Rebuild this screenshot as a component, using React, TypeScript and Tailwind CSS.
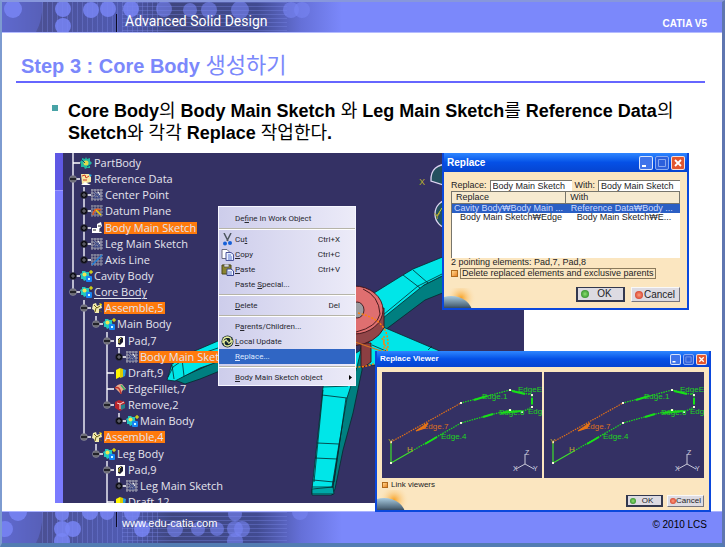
import type { ReactNode } from "react";
import clsx from "clsx";

type NodeIcon = "part" | "reference" | "sketch" | "plane" | "activeSketch" | "axis" | "body" | "assemble" | "pad" | "draft" | "fillet" | "remove";

interface TreeNode {
  label: string;
  level: number;
  icon: NodeIcon;
  knob?: "plus" | "minus";
  selected?: boolean;
  underline?: boolean;
}

const TREE: TreeNode[] = [
  { label: "PartBody", level: 0, icon: "part" },
  { label: "Reference Data", level: 0, icon: "reference", knob: "minus" },
  { label: "Center Point", level: 1, icon: "sketch", knob: "plus" },
  { label: "Datum Plane", level: 1, icon: "plane", knob: "plus" },
  { label: "Body Main Sketch", level: 1, icon: "activeSketch", knob: "plus", selected: true },
  { label: "Leg Main Sketch", level: 1, icon: "sketch", knob: "plus" },
  { label: "Axis Line", level: 1, icon: "axis", knob: "plus" },
  { label: "Cavity Body", level: 0, icon: "body", knob: "plus" },
  { label: "Core Body", level: 0, icon: "body", knob: "minus", underline: true },
  { label: "Assemble,5", level: 1, icon: "assemble", knob: "minus", selected: true },
  { label: "Main Body", level: 2, icon: "body", knob: "minus" },
  { label: "Pad,7", level: 3, icon: "pad", knob: "minus" },
  { label: "Body Main Sketch", level: 4, icon: "sketch", knob: "plus", selected: true },
  { label: "Draft,9", level: 3, icon: "draft" },
  { label: "EdgeFillet,7", level: 3, icon: "fillet" },
  { label: "Remove,2", level: 3, icon: "remove", knob: "minus" },
  { label: "Main Body", level: 4, icon: "body", knob: "plus" },
  { label: "Assemble,4", level: 1, icon: "assemble", knob: "minus", selected: true },
  { label: "Leg Body", level: 2, icon: "body", knob: "minus" },
  { label: "Pad,9", level: 3, icon: "pad", knob: "minus" },
  { label: "Leg Main Sketch", level: 4, icon: "sketch", knob: "plus" },
  { label: "Draft,12", level: 3, icon: "draft" },
];

const INDENT = ["pl-[5px]", "pl-[16px]", "pl-[28px]", "pl-[39px]", "pl-[51px]"];

const HEADER_DOTS = [
  [11, 7, 9], [61, 7, 8], [61, 24, 8], [89, 8, 8], [106, 7, 8], [129, 7, 8],
  [162, 7, 8], [188, 8, 7], [207, 8, 8], [238, 8, 9], [289, 8, 8], [300, 8, 8],
];
const FOOTER_DOTS = [
  [3, 17, 8], [16, 0, 9], [60, 2, 7], [60, 17, 8], [60, 29, 8], [71, 17, 8], [88, 0, 8], [105, 1, 7],
  [130, 1, 8], [140, 17, 8], [173, 17, 8], [196, 17, 7], [215, 17, 7], [233, 2, 7], [233, 17, 8], [233, 29, 8], [240, 17, 8], [298, 0, 8],
];

function BandArt({ id, dots, height }: { id: string; dots: number[][]; height: number }) {
  return (
    <svg className="absolute inset-y-0 left-0" width="340" height={height} viewBox={`0 0 340 ${height}`} aria-hidden="true">
      <defs>
        <linearGradient id={`${id}-base`}>
          <stop offset="0" stopColor="#6670dc" />
          <stop offset=".12" stopColor="#4b5094" />
          <stop offset=".35" stopColor="#505bb2" />
          <stop offset=".5" stopColor="#3f467f" />
          <stop offset=".75" stopColor="#414b91" />
          <stop offset=".88" stopColor="#6570d8" />
          <stop offset="1" stopColor="#7b88fb" />
        </linearGradient>
        <pattern id={`${id}-v`} width="5" height="8" patternUnits="userSpaceOnUse">
          <path d="M.5 0v8" stroke="#7b88e8" strokeWidth=".7" />
        </pattern>
        <pattern id={`${id}-h`} width="8" height="4" patternUnits="userSpaceOnUse">
          <path d="M0 .5h8" stroke="#7b88e8" strokeWidth=".7" />
        </pattern>
      </defs>
      <rect width="340" height={height} fill={`url(#${id}-base)`} />
      <path d={`M0 0H41Q40 20 34 ${height}H0Z`} fill="#5c66c8" opacity=".7" />
      <rect x="38" width="122" height={height} fill={`url(#${id}-v)`} opacity=".5" />
      <rect x="120" width="165" height={height} fill={`url(#${id}-h)`} opacity=".5" />
      {dots.map(([cx, cy, r], i) => (
        <circle key={i} cx={cx} cy={cy} r={r} fill="#7885f4" opacity={cx > 150 ? 0.6 : 0.85} />
      ))}
    </svg>
  );
}

function TreeIcon({ kind }: { kind: NodeIcon }) {
  const art: Record<NodeIcon, ReactNode> = {
    part: (
      <>
        <path d="M6 0l1 2 3-1 0 3 2 2-2 2 0 3-3 0-2 1-1-2-3 0 0-3-1-2 2-2 0-2 3 1z" fill="#22b7a0" />
        <circle cx="6" cy="6" r="2.5" fill="#e3d94c" />
        <path d="M2 3l3 3m2 4l3-2" stroke="#0a4c70" />
      </>
    ),
    body: (
      <>
        <path d="M5 1l1 1 3 0 0 3 1 2-1 3-3 0-2 1-1-2-2 0 0-3-1-2 2-1 0-2z" fill="#22c7c0" />
        <circle cx="4.500" cy="4.500" r="2" fill="#f0e454" />
        <rect x="6" y="6" width="6" height="6" rx="1" fill="#1685f4" />
        <path d="M8 8h2v2H8z" fill="#cff" />
        <path d="M11 0v4M9 2h4" stroke="#ff0" />
      </>
    ),
    reference: (
      <>
        <path d="M1 1h8l2 3v5l-9 2z" fill="#f7e9a6" />
        <path d="M2 3l3-1 1 3 3-2M3 7h4" stroke="#d33a20" fill="none" />
        <path d="M1 12l4-3 6 3z" fill="#fff" />
        <path d="M9 1l3 1-2 2z" fill="#2ad" />
      </>
    ),
    sketch: (
      <>
        <path d="M0 1h12M0 4h12M0 7h12M0 10h12M1 0v12M4 0v12M7 0v12M10 0v12" stroke="#a5a7b5" strokeWidth="1" />
        <path d="M3 3l6 6M4 7l4-3v5H3z" stroke="#3c4c8c" fill="none" />
        <path d="M7 3l2 3" stroke="#fff" />
      </>
    ),
    plane: (
      <>
        <path d="M0 1h12M0 4h12M0 7h12M0 10h12M1 0v12M4 0v12M7 0v12M10 0v12" stroke="#8d8fa0" strokeWidth="1" />
        <path d="M2 10Q3 2 10 5" stroke="#e45a20" strokeWidth="1.500" fill="none" />
        <path d="M5 5l5 5" stroke="#ec0" strokeWidth="1.500" />
      </>
    ),
    activeSketch: (
      <>
        <path d="M1 6h5v5H1zM6 2l4-2 1 4-3 3 3 4H6z" fill="#fff" />
        <path d="M2 8h3M7 4l3 0M8 9h2" stroke="#222" />
      </>
    ),
    axis: (
      <>
        <path d="M0 1h12M0 4h12M0 7h12M0 10h12M1 0v12M4 0v12M7 0v12M10 0v12" stroke="#9698a8" strokeWidth="1" />
        <path d="M1 11L11 1" stroke="#1f7fd8" strokeWidth="1.500" />
      </>
    ),
    assemble: (
      <>
        <path d="M2 2l3-1 1 3 4-2 1 4-3 1 0 4-4 0-1-3-2-1z" fill="#f3ecae" />
        <path d="M3 3l3 3 3-2M5 6l-1 4M8 8l3 2" stroke="#6a5b12" fill="none" />
        <path d="M8 1l3 1-1 2z" fill="#ffe600" />
      </>
    ),
    pad: (
      <>
        <path d="M2 1h9v11H2z" fill="#fff" />
        <path d="M4 9V4l3-2 2 1v4L6 10z" fill="#1c1c30" />
        <path d="M5 8V5l2-2" stroke="#e2d53f" fill="none" />
      </>
    ),
    draft: (
      <>
        <path d="M2 3l4-2v9l-4 2z" fill="#fff600" />
        <path d="M6 1l3 1v8l-3 1z" fill="#dccb00" />
        <path d="M9 2l3 1-1 6-2 1z" fill="#2b9ed8" />
      </>
    ),
    fillet: (
      <>
        <path d="M1 5q2-4 7-4l4 5q-4 0-5 5z" fill="#e9a98c" />
        <path d="M1 5q5-2 6 6" fill="none" stroke="#c0362c" strokeWidth="1.500" />
        <path d="M7 2l4 5" stroke="#35b26a" strokeWidth="1.500" />
      </>
    ),
    remove: (
      <>
        <path d="M1 3l4-2 6 2v6l-5 3-5-3z" fill="#b6242c" />
        <path d="M3 4l3 1 4-2M6 5v5" stroke="#ffd8d0" fill="none" />
        <path d="M7 6l4-1v4l-4 2z" fill="#23808c" />
      </>
    ),
  };
  return (
    <svg className="h-3 w-3 shrink-0 overflow-visible" viewBox="0 0 12 12" aria-hidden="true">
      {art[kind]}
    </svg>
  );
}

function Knob({ type }: { type?: "plus" | "minus" }) {
  return (
    <svg className="h-[10px] w-[12px] shrink-0" viewBox="0 0 12 10" aria-hidden="true">
      <path d="M5 5h7" stroke="#fff" strokeWidth="1.500" />
      {type && <circle cx="5" cy="5" r="3.500" fill={type === "plus" ? "#0b0b12" : "#6a6a72"} stroke={type === "plus" ? "#33334a" : "#8b8ba0"} strokeWidth=".6" />}
      {type === "plus" && <path d="M3 5h4M5 3v4" stroke="#8a8a96" strokeWidth=".8" />}
      {type === "minus" && <path d="M2 5h6" stroke="#0b0b12" strokeWidth="1.500" />}
    </svg>
  );
}

function SpecTree() {
  return (
    <div className="relative pt-[2px]">
      <svg className="absolute left-0 top-0" width="80" height="350" viewBox="0 0 80 350" aria-hidden="true">
        <path
          d="M10 0V139M21 34V107M21 147V284M33 163V172M44 179V253M56 195V204M56 260V268M33 291V301M44 308V350M56 325V333"
          stroke="#e8e8f2"
          strokeWidth="1.500"
        />
      </svg>
      <ul className="relative flex h-[355px] flex-col justify-between">
        {TREE.map((node, i) => (
          <li key={i} className={clsx("flex h-4 items-center whitespace-nowrap", INDENT[node.level])}>
            <Knob type={node.knob} />
            <TreeIcon kind={node.icon} />
            <span
              className={clsx(
                "ml-[1px] pl-[1px] font-['Open_Sans','Liberation_Sans',sans-serif] text-[11px] leading-[12px] text-[#e4e4ee]",
                node.selected && "bg-[#ff7a0c] pr-[1px]",
                node.underline && "underline underline-offset-2",
              )}
            >
              {node.label}
            </span>
          </li>
        ))}
      </ul>
    </div>
  );
}

function Model() {
  return (
    <svg className="absolute inset-0" width="469" height="350" viewBox="55 153 469 350" aria-hidden="true">
      <g stroke="#06282c" strokeWidth=".8" strokeLinejoin="round">
        <path d="M175 380L218 361L232 358V366L200 379L185 384Z" fill="#007f80" />
        <path d="M167 380L172 364L190 353L232 335V357L200 368L175 381Z" fill="#00e6e8" />
        <path d="M168 377l5-10 10-7 35-12M172 365l2 14M182 359l2 17" fill="none" />

        <path d="M383 331V317L420 287L450 272V290L425 300L385 330Z" fill="#007f80" />
        <path d="M374 293L403 275L413 269L450 254V272L424 285L383 318Z" fill="#00e6e8" />
        <path d="M403 275L420 288M413 270L428 283M383 315L418 286L450 270" fill="none" />

        <path d="M366 345L383 327L442 352V365H366Z" fill="#00e6e8" />
        <path d="M372 345l14 6M428 350l4-4" fill="none" />
        <path d="M352 380L362 343V370L353 413L343 450L335 489L332 495L334 480L346 398Z" fill="#007f80" />
        <path d="M328 370L361 350L357 367L347 398L338 450L332 487V495H312V489L317 443L323 387Z" fill="#00e6e8" />
        <path d="M312 494V489L333 487L334 494Z" fill="#00a7a8" />
        <path d="M323 387L348 386M322 395L347 398M317 443L339 444M315 458L337 459M313 480L334 482M312 487H333M323 390L314 482M346 398L334 482" fill="none" />
      </g>
      <g stroke="#3b1216" strokeWidth=".9">
        <path d="M361 343H371V362L364 367H361Z" fill="#8c3f42" />
        <path d="M325 311V325Q330 346 354 346Q376 343 384 328V308Z" fill="#924548" />
        <ellipse cx="354" cy="310" rx="29" ry="24" fill="#df6f70" />
        <path d="M363 289Q379 296 380 314Q377 327 356 332" fill="none" />
        <ellipse cx="357" cy="310" rx="7" ry="8" fill="#9b9ba0" />
      </g>
      <path d="M358 313Q380 318 386 332Q392 352 380 361Q370 367 355 367M384 336v15M382 338l5 12" stroke="#ff8108" strokeWidth="1.500" strokeDasharray="2 1.500" fill="none" />
      <path d="M355 342L387 353" stroke="#d97420" strokeWidth="1.200" />
      <g stroke="#ddd4f2" strokeWidth="1.300" fill="#24505f">
        <path d="M450 164Q430 164 431 181L450 187Z" />
        <ellipse cx="448" cy="214" rx="13" ry="14" />
      </g>
      <path d="M437 216l5-8" stroke="#d8d020" />
      <g fill="#b5ad2c" fontSize="9" fontFamily="Liberation Sans, sans-serif">
        <text x="419" y="185">X</text>
        <text x="434" y="219">Y</text>
      </g>
    </svg>
  );
}

interface MenuItemProps {
  before?: string;
  hot: string;
  after: string;
  shortcut?: string;
  icon?: ReactNode;
  active?: boolean;
  submenu?: boolean;
}

function MenuItem({ before, hot, after, shortcut, icon, active, submenu }: MenuItemProps) {
  return (
    <button
      type="button"
      role="menuitem"
      className={clsx("flex h-[15px] w-full items-center text-left leading-[15px]", active ? "bg-[#3066c4] text-[#dfe9ff]" : "text-[#26262e]")}
    >
      <span className="flex w-[16px] shrink-0 justify-center">{icon}</span>
      <span className="flex-1 whitespace-nowrap">
        {before}
        <u>{hot}</u>
        {after}
      </span>
      {shortcut && <span className="mr-[15px]">{shortcut}</span>}
      {submenu && (
        <svg className="mr-[3px] h-[5px] w-[3px]" viewBox="0 0 3 5" aria-hidden="true">
          <path d="M0 0l3 2.500L0 5z" />
        </svg>
      )}
    </button>
  );
}

function MenuRule() {
  return (
    <div role="separator" className="flex h-[6px] items-center">
      <div className="h-[2px] w-full border-t border-[#b6b4a8] bg-white" />
    </div>
  );
}

const CutIcon = (
  <svg className="h-[13px] w-[11px]" viewBox="0 0 11 13" fill="none" aria-hidden="true">
    <path d="M2 0l4 8M9 0L5 8" stroke="#4d5660" strokeWidth="1.500" />
    <circle cx="3" cy="10.500" r="2" fill="#1560d8" />
    <circle cx="8" cy="10" r="2" fill="#1560d8" />
  </svg>
);

const CopyIcon = (
  <svg className="h-[12px] w-[13px]" viewBox="0 0 13 12" aria-hidden="true">
    <path d="M1 .5h5l2 2v7H1z" fill="#fff" stroke="#6b6b80" />
    <path d="M5 3.500h5l2.500 2v6H5z" fill="#e9efff" stroke="#4b549c" />
    <path d="M7 6h3M7 8h4M7 10h4" stroke="#5f7ad0" />
  </svg>
);

const PasteIcon = (
  <svg className="h-[12px] w-[13px]" viewBox="0 0 13 12" aria-hidden="true">
    <path d="M1 1h9v9H1z" fill="#8a8430" stroke="#4c4818" />
    <path d="M3 0h5v3H3z" fill="#d8d8d8" stroke="#444" strokeWidth=".6" />
    <path d="M6 5h4l2.500 2v4.500H6z" fill="#f4f7ff" stroke="#3a4690" />
    <path d="M7 8h4M7 10h4" stroke="#5f7ad0" />
  </svg>
);

const UpdateIcon = (
  <svg className="h-[13px] w-[13px]" viewBox="0 0 13 13" fill="none" aria-hidden="true">
    <circle cx="6.500" cy="6.500" r="6" fill="#10242c" />
    <path d="M2 8Q1 3 6 2q4 0 4 3T7 8M11 5q1 5-4 6-4 0-4-3t3-3" stroke="#e6ec9c" strokeWidth="1.300" />
    <circle cx="6.500" cy="6.500" r="1" fill="#e6ec9c" />
  </svg>
);

function ContextMenu() {
  return (
    <div
      role="menu"
      className="absolute left-[163px] top-[53px] w-[138px] border border-[#f6f6ff] bg-linear-to-r from-[#cdcdeb] to-[#ecebf8] pt-1 font-['Roboto','Liberation_Sans',sans-serif] text-[8px]"
    >
      <MenuItem before="De" hot="f" after="ine In Work Object" />
      <MenuRule />
      <MenuItem before="Cu" hot="t" after="" shortcut="Ctrl+X" icon={CutIcon} />
      <MenuItem hot="C" after="opy" shortcut="Ctrl+C" icon={CopyIcon} />
      <MenuItem hot="P" after="aste" shortcut="Ctrl+V" icon={PasteIcon} />
      <MenuItem before="Paste " hot="S" after="pecial..." />
      <MenuRule />
      <MenuItem hot="D" after="elete" shortcut="Del" />
      <MenuRule />
      <MenuItem before="P" hot="a" after="rents/Children..." />
      <MenuItem hot="L" after="ocal Update" icon={UpdateIcon} />
      <MenuItem hot="R" after="eplace..." active />
      <MenuRule />
      <MenuItem hot="B" after="ody Main Sketch object" submenu />
    </div>
  );
}

function TitleBar({ title, small }: { title: string; small?: boolean }) {
  const size = small ? "h-[11px] w-[11px]" : "h-[14px] w-[14px]";
  return (
    <div className={clsx("flex items-center bg-linear-to-b from-[#2f86ff] via-[#0550e6] to-[#0644d0] pl-[3px] pr-[2px]", small ? "h-[16px]" : "h-[19px]")}>
      <h2 className={clsx("flex-1 font-bold text-white", small ? "text-[8px]" : "text-[10px]")}>{title}</h2>
      <div className="flex gap-[2px]">
        <button type="button" aria-label="Minimize" className={clsx("rounded-[2px] border border-white/80 bg-[#3f74ea]", size)}>
          <svg viewBox="0 0 12 12" aria-hidden="true">
            <path d="M2 9h4" stroke="#fff" strokeWidth="2" />
          </svg>
        </button>
        <button type="button" aria-label="Maximize" disabled className={clsx("rounded-[2px] border border-[#8aaaf2] bg-[#2d60dc]", size)}>
          <svg viewBox="0 0 12 12" aria-hidden="true">
            <path d="M2.500 2.500h7v7h-7z" stroke="#88a6ee" fill="none" />
          </svg>
        </button>
        <button type="button" aria-label="Close" className={clsx("rounded-[2px] border border-white/80 bg-[#e2562f]", size)}>
          <svg viewBox="0 0 12 12" aria-hidden="true">
            <path d="M3 3l6 6M9 3l-6 6" stroke="#fff" strokeWidth="1.800" />
          </svg>
        </button>
      </div>
    </div>
  );
}

function Planet({ id }: { id: string }) {
  return (
    <svg className="absolute bottom-0 left-0" width="34" height="20" viewBox="0 0 34 20" aria-hidden="true">
      <defs>
        <radialGradient id={`${id}-glow`}>
          <stop offset="0" stopColor="#f8a020" />
          <stop offset="1" stopColor="#fbe6c0" stopOpacity="0" />
        </radialGradient>
        <linearGradient id={`${id}-globe`} x1="0" y1="0" x2="0" y2="1">
          <stop offset="0" stopColor="#a9cbe0" />
          <stop offset=".3" stopColor="#536c80" />
          <stop offset=".5" stopColor="#10161e" />
        </linearGradient>
      </defs>
      <circle cx="17" cy="10" r="15" fill={`url(#${id}-glow)`} />
      <ellipse cx="7" cy="24" rx="21" ry="16" fill={`url(#${id}-globe)`} />
    </svg>
  );
}

function PushButton({ label, tone, small }: { label: string; tone: "ok" | "cancel"; small?: boolean }) {
  return (
    <button
      type="button"
      className={clsx(
        "flex items-center bg-[#dddbe2] text-[#1d1d26]",
        small ? "h-[12px] w-[37px] px-[2px] text-[8px]" : "h-[15px] w-[49px] px-[3px] text-[10px]",
        tone === "ok" ? "border-2 border-t border-[#33384e]" : "border border-[#f8f8f8] border-b-[#77757e] border-r-[#77757e]",
      )}
    >
      <span
        className={clsx(
          "shrink-0 rounded-full bg-radial",
          small ? "h-[6px] w-[6px]" : "h-2 w-2",
          tone === "ok" ? "from-[#8be070] to-[#117a16]" : "from-[#ff9a7c] to-[#c41a10]",
        )}
      />
      <span className="flex-1 text-center leading-none">{label}</span>
    </button>
  );
}

const tickBox = "h-[7px] w-[7px] shrink-0 appearance-none border border-[#b06a1c] bg-linear-to-br from-[#ffd98a] to-[#e8821c]";
const nameField = "h-[11px] min-w-0 flex-1 border-l border-t border-[#77756c] bg-white px-[2px] text-[9px] text-[#1d1d26] outline-none";

function ReplaceDialog() {
  return (
    <section className="absolute left-[387px] top-0 w-[247px] border-2 border-t-0 border-[#0b48dc] bg-[#fbe6c0] text-[9px] text-[#1d1d26]">
      <TitleBar title="Replace" />
      <Planet id="replace" />
      <form className="relative px-[7px] pb-[6px] pt-[7px]">
        <div className="flex items-center gap-[3px] leading-[12px]">
          <label htmlFor="replace-from">Replace:</label>
          <input id="replace-from" className={nameField} defaultValue="Body Main Sketch" />
          <label htmlFor="replace-with">With:</label>
          <input id="replace-with" className={nameField} defaultValue="Body Main Sketch" />
        </div>
        <div className="h-[67px] border-l border-t border-[#77756c] bg-white">
          <table className="w-full table-fixed border-collapse">
            <thead>
              <tr className="h-[11px] bg-[#f6ead0] text-left leading-[11px]">
                <th className="w-1/2 border-b border-r border-[#77756c] p-0 pl-1 font-normal">Replace</th>
                <th className="border-b border-r border-[#77756c] p-0 pl-1 font-normal">With</th>
              </tr>
            </thead>
            <tbody className="whitespace-nowrap leading-[9px]">
              <tr className="bg-[#2b5fc4] text-[#cfdcff]">
                <td className="p-0 pl-[2px]">Cavity Body₩Body Main ...</td>
                <td className="p-0 pl-[5px]">Reference Data₩Body ...</td>
              </tr>
              <tr>
                <td className="p-0 pl-2">Body Main Sketch₩Edge</td>
                <td className="p-0 pl-[11px]">Body Main Sketch₩E...</td>
              </tr>
            </tbody>
          </table>
        </div>
        <p className="leading-[9px]">2 pointing elements: Pad,7, Pad,8</p>
        <div className="mt-[1px] flex items-center gap-[2px]">
          <input id="delete-replaced" type="checkbox" className={tickBox} />
          <label htmlFor="delete-replaced" className="border border-[#8a7a5c] px-[1px] leading-[9px]">
            Delete replaced elements and exclusive parents
          </label>
        </div>
        <div className="mt-2 flex justify-end gap-[6px]">
          <PushButton label="OK" tone="ok" />
          <PushButton label="Cancel" tone="cancel" />
        </div>
      </form>
    </section>
  );
}

const SKETCH_POINTS = [[9, 70], [9, 91], [79, 31], [128, 18], [150, 23], [150, 35], [140, 40], [128, 38], [79, 51]];

function SketchPane() {
  return (
    <svg className="w-full bg-[#343164]" viewBox="0 0 160 106" aria-label="Sketch preview" role="img">
      <g fill="none" strokeWidth="1.200">
        <path d="M9 70L79 31" stroke="#e07018" strokeDasharray="1.500 1" />
        <path d="M34 59l12-8-3 5z" stroke="#e87414" fill="#e87414" />
        <path d="M9 70V91L30 79" stroke="#3ee02c" />
        <path d="M30 79L79 51L104 44L128 38L140 40L150 35V23L128 18L79 31" stroke="#18e018" strokeDasharray="1.500 1" />
        <path d="M92 28l13-4M130 19l13 3M150 26v6M101 45l10-3M43 72l12-7M119 41l20-2" stroke="#18e018" strokeWidth="2" />
      </g>
      <g fill="#f4f4d8">
        {SKETCH_POINTS.map(([x, y], i) => (
          <rect key={i} x={x - 1} y={y - 1} width="2" height="2" />
        ))}
      </g>
      <g fontSize="8" fontFamily="Liberation Sans, sans-serif" fill="#20d420">
        <text x="41" y="57" fill="#de7020">Edge.7</text>
        <text x="100" y="27">Edge.1</text>
        <text x="136" y="20">EdgeE</text>
        <text x="117" y="43">Edge.6</text>
        <text x="146" y="42">Edg</text>
        <text x="59" y="67">Edge.4</text>
        <text x="25" y="80" fill="#c5a52c">H</text>
        <text x="6" y="72" fill="#c5a52c">Y</text>
      </g>
      <path d="M143 82V92L134 97M143 92L152 97" stroke="#c9c9d8" fill="none" />
      <g fontSize="7" fontFamily="Liberation Sans, sans-serif" fill="#d5d5e2">
        <text x="143" y="83">Z</text>
        <text x="131" y="99">X</text>
        <text x="151" y="99">Y</text>
      </g>
    </svg>
  );
}

function ReplaceViewer() {
  return (
    <section className="absolute left-[320px] top-[198px] z-10 w-[336px] border-2 border-t-0 border-[#0b48dc] bg-[#fbe6c0] text-[8px] text-[#1d1d26]">
      <TitleBar title="Replace Viewer" small />
      <Planet id="viewer" />
      <div className="relative px-[5px] pb-[3px] pt-[5px]">
        <div className="grid grid-cols-2 gap-[2px]">
          <SketchPane />
          <SketchPane />
        </div>
        <div className="mt-[2px] flex h-[10px] items-center gap-[3px]">
          <input id="link-viewers" type="checkbox" className="h-[6px] w-[6px] shrink-0 appearance-none border border-[#b06a1c] bg-linear-to-br from-[#ffd98a] to-[#e8821c]" />
          <label htmlFor="link-viewers">Link viewers</label>
        </div>
        <div className="mt-[5px] flex justify-end gap-1">
          <PushButton label="OK" tone="ok" small />
          <PushButton label="Cancel" tone="cancel" small />
        </div>
      </div>
    </section>
  );
}

export default function App() {
  return (
    <div className="flex min-h-screen flex-col border-b-4 border-l-2 border-r-[3px] border-t-2 border-b-[#527cb2] border-l-[#7d9bd0] border-r-[#5f76b0] border-t-[#8797dc] bg-white font-['Liberation_Sans','Noto_Sans_CJK_KR',sans-serif]">
      <header className="relative flex h-[31px] items-center justify-between border-b border-[#b5bcff] bg-[#7b88fb] text-white">
        <BandArt id="head" dots={HEADER_DOTS} height={30} />
        <div className="relative ml-[114px] flex h-full items-end">
          <span className="h-[18px] w-[1px] bg-[#0b0b24]" />
          <span className="mb-[2px] ml-2 font-['Roboto','Liberation_Sans',sans-serif] text-[14px] leading-[18px]">Advanced Solid Design</span>
        </div>
        <span className="mr-[15px] mt-3 text-[10px] font-bold">CATIA V5</span>
      </header>

      <main>
        <h1 className="ml-[14px] mr-[17px] mt-[18px] border-b-2 border-[#6666ff] pl-[5px] text-[20px] font-bold leading-[30px] text-[#7b88fb]">
          Step 3 : Core Body <span className="text-[22px] font-normal">생성하기</span>
        </h1>

        <ul className="ml-[50px] mr-8 mt-[17px]">
          <li className="flex gap-[10px] text-[18px] font-bold leading-[22px] text-black">
            <span className="mt-[5px] h-[6px] w-[6px] shrink-0 bg-[#48a3a6]" />
            <p>
              Core Body<span className="font-normal">의</span> Body Main Sketch <span className="font-normal">와</span> Leg Main Sketch
              <span className="font-normal">를</span> Reference Data<span className="font-normal">의</span>
              <br />
              Sketch<span className="font-normal">와 각각</span> Replace <span className="font-normal">작업한다</span>.
            </p>
          </li>
        </ul>

        <div className="relative mb-2 ml-[53px] mt-[9px]">
          <div className="relative flex h-[350px] w-[469px] overflow-hidden bg-[#343164]">
            <div className="flex w-2 flex-col bg-[#7b7bff]">
              <div className="h-[38px] border-b border-[#9a98ff] bg-[#5f58e4]" />
            </div>
            <Model />
            <SpecTree />
          </div>
          <ContextMenu />
          <ReplaceDialog />
          <ReplaceViewer />
        </div>
      </main>

      <footer className="relative mt-auto flex h-8 items-center justify-between border-t border-[#a9b2ff] bg-[#7b88fb]">
        <BandArt id="foot" dots={FOOTER_DOTS} height={31} />
        <div className="relative ml-[114px] flex h-full items-start">
          <span className="h-[15px] w-[1px] bg-[#0b0b24]" />
          <a href="http://www.edu-catia.com" className="ml-[5px] mt-[2px] text-[11px] leading-[18px] text-white">
            www.edu-catia.com
          </a>
        </div>
        <small className="mb-[7px] mr-[15px] text-[10px] text-black">© 2010 LCS</small>
      </footer>
    </div>
  );
}
